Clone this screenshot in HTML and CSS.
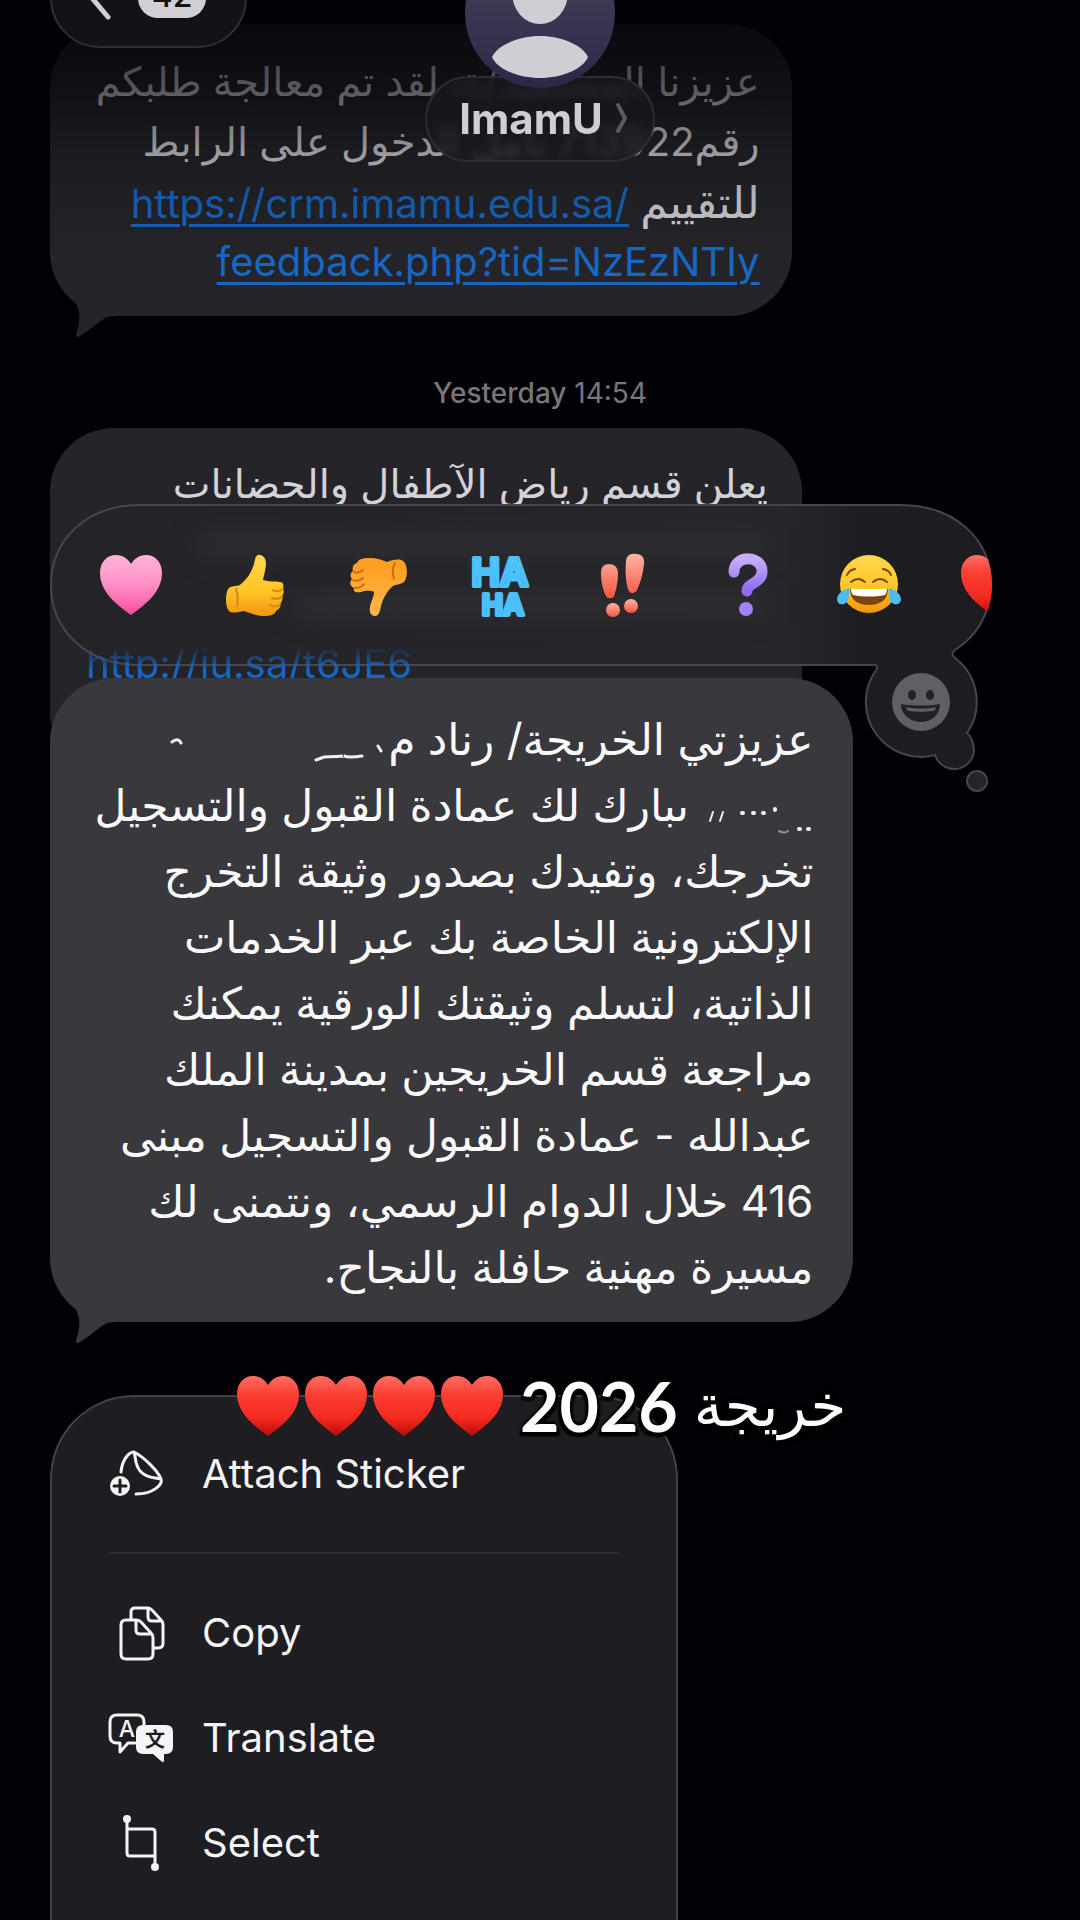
FILE: index.html
```html
<!DOCTYPE html>
<html lang="en">
<head>
<meta charset="utf-8">
<meta name="viewport" content="width=device-width, initial-scale=1">
<title>ImamU</title>
<link rel="stylesheet" href="styles.css">
</head>
<body>
<svg class="defs" aria-hidden="true">
  <defs>
    <linearGradient id="red" x1="0" y1="0" x2="0" y2="1"><stop offset="0" stop-color="#ff6f64"/><stop offset=".3" stop-color="#fb3f33"/><stop offset=".7" stop-color="#f52a20"/><stop offset="1" stop-color="#b90d0b"/></linearGradient>
    <linearGradient id="pink" x1="0" y1="0" x2="0" y2="1"><stop offset="0" stop-color="#ffb3da"/><stop offset=".5" stop-color="#ff8fc6"/><stop offset="1" stop-color="#fb4c9c"/></linearGradient>
    <linearGradient id="gold" x1="0" y1="0" x2="0" y2="1"><stop offset="0" stop-color="#ffd84a"/><stop offset=".6" stop-color="#ffc527"/><stop offset="1" stop-color="#f0930f"/></linearGradient>
    <linearGradient id="amber" x1="0" y1="0" x2="0" y2="1"><stop offset="0" stop-color="#ff9d1e"/><stop offset="1" stop-color="#ffb648"/></linearGradient>
    <linearGradient id="sky" x1="0" y1="0" x2="0" y2="1"><stop offset="0" stop-color="#7fdcff"/><stop offset="1" stop-color="#1fa6f5"/></linearGradient>
    <linearGradient id="coral" x1="0" y1="0" x2="0" y2="1"><stop offset="0" stop-color="#ffb5a6"/><stop offset="1" stop-color="#f9553f"/></linearGradient>
    <linearGradient id="violet" x1="0" y1="0" x2="0" y2="1"><stop offset="0" stop-color="#c6aef9"/><stop offset="1" stop-color="#8e6bf0"/></linearGradient>
    <linearGradient id="glass" x1="0" y1="0" x2="1" y2="0"><stop offset="0" stop-color="#242428"/><stop offset=".78" stop-color="#27262b"/><stop offset=".86" stop-color="#1e1d22"/><stop offset="1" stop-color="#1d1c20"/></linearGradient>
    <symbol id="heart" viewBox="0 0 64 64"><path d="M32 62C20 53 1 40 1 20 1 9 8 2 17 2c7 0 12 4 15 9C35 6 40 2 47 2c9 0 16 7 16 18 0 20-19 33-31 42Z"/></symbol>
    <symbol id="tail" viewBox="0 0 44 40"><path d="M0 0C8 14 3 24 1 33c0 2 2 3 4 1C15 28 24 19 32 15 36 14 40 14 44 14V0Z"/></symbol>
  </defs>
</svg>

<header class="topbar">
  <button class="back" type="button" aria-label="Back, 42 unread">
    <svg class="chevron" viewBox="0 0 24 44" aria-hidden="true"><path d="M20 3 4 22l16 19"/></svg>
    <span class="count">42</span>
  </button>
  <div class="contact">
    <svg class="avatar" viewBox="0 0 150 150" aria-hidden="true">
      <defs><linearGradient id="av" x1="0" y1="0" x2="0" y2="1"><stop offset="0" stop-color="#4a465c"/><stop offset="1" stop-color="#2c2748"/></linearGradient></defs>
      <circle cx="75" cy="75" r="75" fill="url(#av)"/>
      <ellipse cx="75" cy="55" rx="28" ry="31" fill="#cfced4"/>
      <path d="M27 119C32 108 52 98 75 98s43 10 48 21c-5 12-26 21-48 21s-43-9-48-21Z" fill="#cfced4"/>
    </svg>
    <button class="name" type="button">ImamU
      <svg class="more" viewBox="0 0 14 34" aria-hidden="true"><path d="M3 4q7 13 7 13t-7 13"/></svg>
    </button>
  </div>
</header>

<main class="thread">
  <article class="bubble bubble-first" dir="rtl">
    <p class="text"><span class="line">عزيزنا المستفيد/ة، لقد تم معالجة طلبكم</span>
      <span class="line">رقم713922 نأمل الدخول على الرابط</span>
      <span class="line"><span class="lead">للتقييم</span> <a href="#feedback" dir="ltr">https://crm.imamu.edu.sa/</a></span>
      <span class="line"><a href="#feedback" dir="ltr">feedback.php?tid=NzEzNTIy</a></span></p>
    <svg class="tail"><use href="#tail"/></svg>
  </article>

  <time class="stamp"><b>Yesterday</b> 14:54</time>

  <section class="stack">
    <article class="bubble bubble-second" dir="rtl">
      <p class="text"><span class="line">يعلن قسم رياض الآطفال والحضانات</span>
        <span class="line haze haze-wide"></span>
        <span class="line haze"></span>
        <span class="line line-left"><a class="peek" href="#kindergarten" dir="ltr">http://iu.sa/t6JE6</a></span></p>
    </article>

    <div class="tray">
      <svg class="tray-shape" viewBox="0 0 942 290" aria-hidden="true">
        <path d="M90 1H850C905 1 941 35 941 80 941 112 924 134 905 146 901 149 902 151 905 154A55 55 0 0 1 917 229C920 231 924 238 924 247A20 20 0 0 1 885 251 55 55 0 0 1 826 166C828 163 828 161 824 161H90C35 161 1 125 1 81S35 1 90 1Z"/>
        <circle cx="927" cy="277" r="10"/>
      </svg>
      <div class="tray-row">
        <button type="button" class="react" aria-label="Love"><svg viewBox="0 0 64 64"><use href="#heart" fill="url(#pink)"/></svg></button>
        <button type="button" class="react" aria-label="Like"><svg viewBox="0 0 64 64"><path fill="url(#gold)" d="M36 2c4-1 8 3 8 8 0 6-2 11-3 17 6 2 12 1 17 2 3 0 4 3 3 6 1 3 1 6-1 8 1 3 0 6-2 8 1 3-1 6-4 7-1 4-6 5-12 5-8 0-14-3-20-5-5 1-12 3-15 0-4-4-4-19 0-23 4-3 9-1 12-4 7-6 11-13 13-20 1-4 1-8 4-9Z"/><path d="M61 36q-6 4-10 1M60 44q-6 3-10 1M58 52q-5 3-10 0M14 36q3 8 1 17" fill="none" stroke="#d98708" stroke-width="2" stroke-linecap="round"/></svg></button>
        <button type="button" class="react" aria-label="Dislike"><svg viewBox="0 0 64 64"><path fill="url(#amber)" d="M30 63c-4 0-6-4-5-9 1-6 4-10 4-15-4-2-9-1-13 0-5 1-8 0-7-4 -4-2-5-6-2-9-2-3-2-6 1-8-1-3 0-7 4-8 2-5 8-5 13-5 7 0 12 2 17 4 5-2 12-4 16-1 5 3 5 17 1 21-4 3-8 2-11 4-6 5-10 12-12 20-1 5-2 10-6 10Z"/><path d="M9 19q5 2 9-2M8 27q6 2 10-2M10 35q6 0 9-4M50 10q-4 6-1 16" fill="none" stroke="#d06c0c" stroke-width="2" stroke-linecap="round"/></svg></button>
        <button type="button" class="react" aria-label="Haha"><svg class="haha" viewBox="0 0 64 64"><text x="32" y="33" font-size="38">HA</text><text x="35" y="62" font-size="28">HA</text></svg></button>
        <button type="button" class="react" aria-label="Emphasise"><svg viewBox="0 0 64 64" fill="url(#coral)"><path d="M10 20c0-6 3-9 8-9s9 3 9 9c0 9-2 18-4 23-1 3-7 3-8 0-3-6-5-14-5-23ZM35 9c0-6 4-9 10-8 5 0 9 3 8 10-1 10-4 20-7 26-2 4-8 4-9-1-2-7-3-17-2-27Z"/><circle cx="22" cy="57" r="7"/><circle cx="40" cy="53" r="7"/></svg></button>
        <button type="button" class="react" aria-label="Question"><svg viewBox="0 0 64 64"><path d="M20 19C20 1 49 2 48 19c0 11-16 12-15 19" fill="none" stroke="url(#violet)" stroke-width="11" stroke-linecap="round"/><circle cx="32" cy="56" r="7" fill="#a382f6"/></svg></button>
        <button type="button" class="react" aria-label="Tears of joy"><svg viewBox="0 0 64 64"><circle cx="32" cy="31" r="29" fill="url(#gold)"/><path d="M10 22q2-5 8-6M54 22q-2-5-8-6M14 29q7-6 14 0M36 29q7-6 14 0" fill="none" stroke="#7a4308" stroke-width="2" stroke-linecap="round"/><path d="M13 36h38c0 11-8 16-19 16s-19-5-19-16Z" fill="#7d4309"/><path d="M14 36h36c0 3-1 5-2 6-10 2-22 2-32 0-1-1-2-3-2-6Z" fill="#fff"/><path d="M12 35c-5 1-12 6-12 11 0 7 9 7 11 1 1-4 2-8 1-12ZM52 35c5 1 12 6 12 11 0 7-9 7-11 1-1-4-2-8-1-12Z" fill="#4bbdf2"/></svg></button>
        <button type="button" class="react" aria-label="Red heart"><svg viewBox="0 0 64 64"><use href="#heart" fill="url(#red)"/></svg></button>
      </div>
      <button type="button" class="picker" aria-label="More emoji"><svg viewBox="0 0 58 58"><circle cx="29" cy="29" r="29" fill="#605f64"/><g fill="#222126"><ellipse cx="20" cy="22" rx="4" ry="5"/><ellipse cx="38" cy="22" rx="4" ry="5"/><path d="M9 31c12 2 27 2 39 0 0 11-9 18-19 18S9 42 9 31Z"/></g><path d="M14 34c9 2 21 2 30 0-1 3-2 4-3 4-7 1-17 1-24 0-1 0-2-1-3-4Z" fill="#605f64"/></svg></button>
    </div>

    <article class="bubble bubble-active" dir="rtl">
      <p class="text"><span class="line">عزيزتي الخريجة/ رناد م<svg class="scrap scrap-long" viewBox="0 0 220 44" aria-hidden="true"><path d="M213 24l-3-5M194 29q-13 2-18 0 2 0-20 1l-8 3M4 15q6-5 9 1"/></svg></span>
        <span class="line"><svg class="scrap scrap-short" viewBox="0 0 112 44" aria-hidden="true"><path d="M98 36h1M107 36h1M74 16v1M62 20h1M52 20h1M41 20h1"/><path class="thin" d="M22 19l-3 9M12 19l-3 9"/><path class="faint" d="M78 38q6 3 9 0"/></svg> ٮبارك لك عمادة القبول والتسجيل</span>
        <span class="line">تخرجك، وتفيدك بصدور وثيقة التخرج</span>
        <span class="line">الإلكترونية الخاصة بك عبر الخدمات</span>
        <span class="line">الذاتية، لتسلم وثيقتك الورقية يمكنك</span>
        <span class="line">مراجعة قسم الخريجين بمدينة الملك</span>
        <span class="line">عبدالله - عمادة القبول والتسجيل مبنى</span>
        <span class="line">416 خلال الدوام الرسمي، ونتمنى لك</span>
        <span class="line">مسيرة مهنية حافلة بالنجاح.</span></p>
      <svg class="tail"><use href="#tail"/></svg>
    </article>
  </section>

  <section class="menu">
    <p class="caption" dir="rtl"><span class="caption-word">خريجة</span> <span class="caption-year">2026</span>
      <span class="hearts" role="img" aria-label="Four red hearts"><svg><use href="#heart" fill="url(#red)"/></svg><svg><use href="#heart" fill="url(#red)"/></svg><svg><use href="#heart" fill="url(#red)"/></svg><svg><use href="#heart" fill="url(#red)"/></svg></span></p>
    <button type="button" class="item">
      <svg class="icon" viewBox="0 0 68 56" aria-hidden="true"><path d="M14 26C15 15 21 6 27 6c10 5 24 19 27 27 2 5-7 15-25 15M27 6c2 4 0 13 7 20s14 5 20 7"/><circle cx="13" cy="40" r="10" fill="#f5f5f7" stroke="none"/><path d="M7 40h12M13 34v12" stroke="#1e1d22"/></svg>
      Attach Sticker</button>
    <hr class="rule">
    <button type="button" class="item">
      <svg class="icon" viewBox="0 0 68 56" aria-hidden="true"><path d="M19 15h10q3 0 5 2l10 11q2 2 2 5v16q0 5-5 5H19q-5 0-5-5V20q0-5 5-5ZM29 16v9q0 4 4 4h12M24 14V7q0-4 4-4h12q3 0 5 2l9 10q2 2 2 5v18q0 5-5 5h-5M41 4v8q0 4 4 4h10"/></svg>
      Copy</button>
    <button type="button" class="item">
      <svg class="icon" viewBox="0 0 68 56" aria-hidden="true"><path d="M28 33h-7l-8 9v-9H10q-7 0-7-7V12q0-7 7-7h20q7 0 7 7v3"/><path d="M36 15h23q7 0 7 7v15q0 7-7 7h-2v6q0 4-3 1l-8-7H36q-7 0-7-7V22q0-7 7-7Z" fill="#f5f5f7" stroke="none"/><text class="glyph-a" x="20" y="27">A</text><text class="glyph-wen" x="48" y="37">文</text></svg>
      Translate</button>
    <button type="button" class="item">
      <svg class="icon" viewBox="0 0 68 56" aria-hidden="true"><path d="M20 5v33q0 3 3 3h24M20 14h25q3 0 3 3v34"/><g fill="#f5f5f7" stroke="none"><circle cx="20" cy="4" r="4"/><circle cx="48" cy="52" r="4"/></g></svg>
      Select</button>
  </section>
</main>
</body>
</html>
```
FILE: styles.css
```css
* { box-sizing: border-box; }

body {
  margin: 0;
  background: #020106;
  color: #f5f5f7;
  font-family: Inter, "DejaVu Sans", sans-serif;
  font-size: 40px;
}

button {
  margin: 0;
  padding: 0;
  border: 0;
  background: none;
  color: inherit;
  font: inherit;
}

svg { display: block; }
.defs { position: absolute; width: 0; height: 0; }

/* Header floats over the scrolled conversation */
.topbar {
  position: absolute;
  z-index: 5;
  top: 0;
  left: 0;
  right: 0;
  height: 260px;
  overflow: hidden;
  background: linear-gradient(rgba(2, 1, 6, .86), rgba(2, 1, 6, .58) 35%, rgba(2, 1, 6, .26) 60%, rgba(2, 1, 6, 0));
}

.back {
  position: absolute;
  top: -52px;
  left: 50px;
  display: flex;
  align-items: center;
  gap: 24px;
  width: 197px;
  height: 100px;
  padding-left: 34px;
  border: 2px solid #2e2d31;
  border-radius: 50px;
  background: #131217;
}

.chevron { width: 28px; height: 44px; fill: none; stroke: #d0cfd4; stroke-width: 5; stroke-linecap: round; }

.count {
  width: 68px;
  height: 40px;
  border-radius: 20px;
  background: #d0cfd4;
  color: #131217;
  font-size: 32px;
  line-height: 36px;
  font-weight: 500;
}

.contact {
  display: flex;
  flex-direction: column;
  align-items: center;
  margin-top: -62px;
}

.avatar { position: relative; z-index: 1; width: 150px; height: 150px; }

.name {
  display: flex;
  align-items: center;
  gap: 12px;
  height: 86px;
  margin-top: -12px;
  padding: 0 24px 2px 32px;
  border: 2px solid #2e2d31;
  border-radius: 43px;
  background: rgba(24, 23, 28, .78);
  backdrop-filter: blur(4px);
  color: #cfced4;
  font-size: 42px;
  font-weight: 700;
}

.more { width: 14px; height: 34px; fill: none; stroke: #5c5b60; stroke-width: 4; stroke-linecap: round; }

.thread {
  display: flex;
  flex-direction: column;
  height: 100vh;
  min-height: 1600px;
  padding: 24px 0 0 50px;
  overflow: hidden;
}

/* Bubbles */
.bubble {
  position: relative;
  padding: 28px 34px 24px;
  border-radius: 64px;
  background: #252429;
  color: #d3d2d7;
}

.text { margin: 0; line-height: 60px; }
.line { display: block; height: 60px; white-space: nowrap; }
.line-left { text-align: left; }
.lead { font-size: 44px; }
.bubble a { color: #1668c4; text-decoration: underline; text-decoration-thickness: 3px; text-underline-offset: 6px; }

.bubble-first { width: 72%; padding-right: 32px; }
.bubble-second { width: 73%; padding: 26px 34px 82px 36px; }

.tail { position: absolute; left: 25px; bottom: -26px; width: 44px; height: 40px; fill: #252429; }

.stamp {
  margin: 61px 50px 19px 0;
  color: #77767c;
  font-size: 28px;
  line-height: 32px;
  text-align: center;
}
.stamp b { font-weight: 500; }

.stack { position: relative; }

/* Text blurred by the glass tray above it */
.haze { position: relative; z-index: 2; display: flow-root; width: 70%; height: 60px; }
.haze-wide { width: 84%; }
.haze::before {
  content: "";
  display: block;
  height: 22px;
  margin-top: 20px;
  border-radius: 11px;
  background: #2e2d32;
  filter: blur(12px);
}

.bubble .peek {
  position: relative;
  z-index: 2;
  text-decoration: none;
  -webkit-mask-image: linear-gradient(transparent 15%, #000 65%);
  mask-image: linear-gradient(transparent 15%, #000 65%);
}

.bubble-active {
  z-index: 3;
  width: 78%;
  margin-top: -98px;
  padding: 28px 40px 22px;
  background: #39383d;
  color: #fafafc;
  font-size: 44px;
}
.bubble-active .text { line-height: 66px; }
.bubble-active .line { height: 66px; }
.bubble-active .tail { fill: #39383d; }

.scrap { display: inline-block; height: 44px; vertical-align: -16px; fill: none; stroke: #f0f0f3; stroke-width: 4; stroke-linecap: round; }
.scrap-long { width: 220px; stroke-width: 3; }
.scrap-short { width: 112px; }
.thin { stroke-width: 2; }
.faint { stroke: #8f8e93; stroke-width: 2; }

/* Reaction tray over the conversation */
.tray { position: absolute; top: 76px; left: 0; width: 942px; height: 290px; }
.tray-shape { position: absolute; z-index: 1; inset: 0; fill: url(#glass); stroke: #47464b; stroke-width: 2; }
.tray-row {
  position: relative;
  z-index: 3;
  display: flex;
  height: 162px;
  padding-left: 19px;
  border-radius: 81px;
  overflow: hidden;
}
.react { display: flex; flex: none; align-items: center; justify-content: center; width: 123px; }
.react svg { width: 64px; height: 64px; }
.haha { overflow: visible; fill: url(#sky); stroke: #4cc0fa; stroke-width: 4; stroke-linejoin: round; font-family: Inter, sans-serif; font-weight: 700; text-anchor: middle; }
.picker { position: absolute; z-index: 3; top: 169px; left: 842px; }
.picker svg { width: 58px; height: 58px; }

/* Context menu */
.menu {
  position: relative;
  flex: 1;
  width: 61%;
  margin-top: 73px;
  padding-top: 24px;
  border: 2px solid #434247;
  border-bottom: 0;
  border-radius: 84px 84px 0 0;
  background: #1e1d22;
}

.item {
  display: flex;
  align-items: center;
  gap: 27px;
  width: 100%;
  height: 105px;
  padding-left: 55px;
  text-align: left;
}
.icon { width: 68px; height: 56px; fill: none; stroke: #f5f5f7; stroke-width: 3; stroke-linecap: round; stroke-linejoin: round; }
.icon text { stroke: none; text-anchor: middle; }
.glyph-a { fill: #f5f5f7; font-size: 23px; font-weight: 500; }
.glyph-wen { fill: #1e1d22; font-family: "Noto Sans CJK SC", sans-serif; font-size: 20px; font-weight: 700; }
.rule { margin: 26px 58px; border: 0; border-top: 2px solid #2e2d32; }

.caption {
  position: absolute;
  z-index: 4;
  top: -31px;
  left: 184px;
  display: flex;
  align-items: center;
  gap: 16px;
  margin: 0;
  color: #fff;
  line-height: 80px;
  white-space: nowrap;
  text-shadow: 0 0 4px #000, 3px 4px 2px #000, -3px 4px 2px #000, 0 -2px 2px #000;
}
.caption-word { font-family: "DejaVu Sans", sans-serif; font-size: 58px; }
.caption-year { font-family: Lato, sans-serif; font-size: 68px; font-weight: 700; }
.hearts { display: flex; gap: 4px; }
.hearts svg { width: 64px; height: 64px; }
```
